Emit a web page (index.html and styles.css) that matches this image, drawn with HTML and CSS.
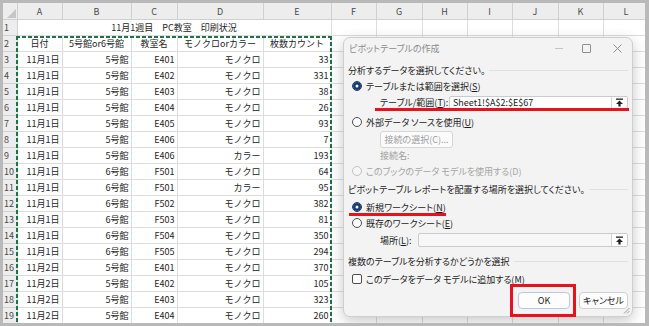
FILE: index.html
```html
<!DOCTYPE html>
<html lang="ja">
<head>
  <meta charset="UTF-8">
  <title>ピボットテーブルの作成</title>
  <link rel="stylesheet" href="styles.css">
</head>
<body>
  <div class="frame">
    <div class="sheet">
      <table class="grid">
        <colgroup>
          <col style="width:14px"><col style="width:45px"><col style="width:69px"><col style="width:46px"><col style="width:86px"><col style="width:68px">
          <col style="width:45px"><col style="width:46px"><col style="width:45px"><col style="width:45px"><col style="width:46px"><col style="width:45px"><col style="width:46px">
        </colgroup>
        <thead>
          <tr>
            <th class="corner"><span class="tri"></span></th>
            <th>A</th><th>B</th><th>C</th><th>D</th><th>E</th><th>F</th><th>G</th><th>H</th><th>I</th><th>J</th><th>K</th><th>L</th>
          </tr>
        </thead>
        <tbody>
          <tr><th class="rh">1</th><td colspan="5" class="c">11月1週目　PC教室　印刷状況</td><td></td><td></td><td></td><td></td><td></td><td></td><td></td></tr>
          <tr><th class="rh">2</th><td class="c">日付</td><td class="c">5号館or6号館</td><td class="c">教室名</td><td class="c">モノクロorカラー</td><td class="c">枚数カウント</td><td></td><td></td><td></td><td></td><td></td><td></td><td></td></tr>
          <tr><th class="rh">3</th><td class="r">11月1日</td><td class="r">5号館</td><td class="r">E401</td><td class="r">モノクロ</td><td class="r">33</td><td></td><td></td><td></td><td></td><td></td><td></td><td></td></tr>
          <tr><th class="rh">4</th><td class="r">11月1日</td><td class="r">5号館</td><td class="r">E402</td><td class="r">モノクロ</td><td class="r">331</td><td></td><td></td><td></td><td></td><td></td><td></td><td></td></tr>
          <tr><th class="rh">5</th><td class="r">11月1日</td><td class="r">5号館</td><td class="r">E403</td><td class="r">モノクロ</td><td class="r">38</td><td></td><td></td><td></td><td></td><td></td><td></td><td></td></tr>
          <tr><th class="rh">6</th><td class="r">11月1日</td><td class="r">5号館</td><td class="r">E404</td><td class="r">モノクロ</td><td class="r">26</td><td></td><td></td><td></td><td></td><td></td><td></td><td></td></tr>
          <tr><th class="rh">7</th><td class="r">11月1日</td><td class="r">5号館</td><td class="r">E405</td><td class="r">モノクロ</td><td class="r">93</td><td></td><td></td><td></td><td></td><td></td><td></td><td></td></tr>
          <tr><th class="rh">8</th><td class="r">11月1日</td><td class="r">5号館</td><td class="r">E406</td><td class="r">モノクロ</td><td class="r">7</td><td></td><td></td><td></td><td></td><td></td><td></td><td></td></tr>
          <tr><th class="rh">9</th><td class="r">11月1日</td><td class="r">5号館</td><td class="r">E406</td><td class="r">カラー</td><td class="r">193</td><td></td><td></td><td></td><td></td><td></td><td></td><td></td></tr>
          <tr><th class="rh">10</th><td class="r">11月1日</td><td class="r">6号館</td><td class="r">F501</td><td class="r">モノクロ</td><td class="r">64</td><td></td><td></td><td></td><td></td><td></td><td></td><td></td></tr>
          <tr><th class="rh">11</th><td class="r">11月1日</td><td class="r">6号館</td><td class="r">F501</td><td class="r">カラー</td><td class="r">95</td><td></td><td></td><td></td><td></td><td></td><td></td><td></td></tr>
          <tr><th class="rh">12</th><td class="r">11月1日</td><td class="r">6号館</td><td class="r">F502</td><td class="r">モノクロ</td><td class="r">382</td><td></td><td></td><td></td><td></td><td></td><td></td><td></td></tr>
          <tr><th class="rh">13</th><td class="r">11月1日</td><td class="r">6号館</td><td class="r">F503</td><td class="r">モノクロ</td><td class="r">81</td><td></td><td></td><td></td><td></td><td></td><td></td><td></td></tr>
          <tr><th class="rh">14</th><td class="r">11月1日</td><td class="r">6号館</td><td class="r">F504</td><td class="r">モノクロ</td><td class="r">350</td><td></td><td></td><td></td><td></td><td></td><td></td><td></td></tr>
          <tr><th class="rh">15</th><td class="r">11月1日</td><td class="r">6号館</td><td class="r">F505</td><td class="r">モノクロ</td><td class="r">294</td><td></td><td></td><td></td><td></td><td></td><td></td><td></td></tr>
          <tr><th class="rh">16</th><td class="r">11月2日</td><td class="r">5号館</td><td class="r">E401</td><td class="r">モノクロ</td><td class="r">370</td><td></td><td></td><td></td><td></td><td></td><td></td><td></td></tr>
          <tr><th class="rh">17</th><td class="r">11月2日</td><td class="r">5号館</td><td class="r">E402</td><td class="r">モノクロ</td><td class="r">105</td><td></td><td></td><td></td><td></td><td></td><td></td><td></td></tr>
          <tr><th class="rh">18</th><td class="r">11月2日</td><td class="r">5号館</td><td class="r">E403</td><td class="r">モノクロ</td><td class="r">323</td><td></td><td></td><td></td><td></td><td></td><td></td><td></td></tr>
          <tr><th class="rh">19</th><td class="r">11月2日</td><td class="r">5号館</td><td class="r">E404</td><td class="r">モノクロ</td><td class="r">260</td><td></td><td></td><td></td><td></td><td></td><td></td><td></td></tr>
        </tbody>
      </table>

      <!-- copy range marquee A2:E67 -->
      <div class="marquee"></div>

      <div class="dialog">
        <div class="titlebar">
          <span class="title">ピボットテーブルの作成</span>
          <span class="wbtn wbtn-min"><span class="min-line"></span></span>
          <span class="wbtn wbtn-max"><span class="max-box"></span></span>
          <span class="wbtn wbtn-close">
            <svg width="9" height="9" viewBox="0 0 9 9"><path d="M0.5 0.5 L8.5 8.5 M8.5 0.5 L0.5 8.5" stroke="#8f8f8f" stroke-width="1" fill="none"/></svg>
          </span>
        </div>

        <div class="sec sec-first">分析するデータを選択してください。</div>
        <div class="opt"><span class="radio checked"></span><span>テーブルまたは範囲を選択(<span class="key">S</span>)</span></div>
        <div class="field">
          <span class="field-label range-label">テーブル/範囲(<span class="key">T</span>):</span>
          <div class="input">
            <span class="input-text">Sheet1!$A$2:$E$67</span>
            <span class="pick">
              <svg width="9" height="9" viewBox="0 0 9 9"><rect x="1" y="0.5" width="7" height="1.3" fill="#222"/><path d="M4.5 2.6 L8 6 L5.6 6 L5.6 8.6 L3.4 8.6 L3.4 6 L1 6 Z" fill="#222"/></svg>
            </span>
          </div>
        </div>
        <div class="opt opt-gap"><span class="radio"></span><span>外部データ ソースを使用(<span class="key">U</span>)</span></div>
        <div class="btn-row"><span class="btn-ghost">接続の選択(C)...</span></div>
        <div class="muted-row">接続名:</div>
        <div class="opt disabled"><span class="radio"></span><span>このブックのデータ モデルを使用する(D)</span></div>

        <div class="sec sec-gap">ピボットテーブル レポートを配置する場所を選択してください。</div>
        <div class="opt opt-tight"><span class="radio checked"></span><span>新規ワークシート(<span class="key">N</span>)</span></div>
        <div class="opt"><span class="radio"></span><span>既存のワークシート(<span class="key">E</span>)</span></div>
        <div class="field field-place">
          <span class="field-label place-label">場所(<span class="key">L</span>):</span>
          <div class="input input-place">
            <span class="input-text"></span>
            <span class="pick">
              <svg width="9" height="9" viewBox="0 0 9 9"><rect x="1" y="0.5" width="7" height="1.3" fill="#222"/><path d="M4.5 2.6 L8 6 L5.6 6 L5.6 8.6 L3.4 8.6 L3.4 6 L1 6 Z" fill="#222"/></svg>
            </span>
          </div>
        </div>

        <div class="sec sec-gap2">複数のテーブルを分析するかどうかを選択</div>
        <div class="opt opt-tight"><span class="check"></span><span>このデータをデータ モデルに追加する(<span class="key">M</span>)</span></div>

        <div class="actions">
          <button class="btn btn-ok">OK</button>
          <button class="btn">キャンセル</button>
        </div>

        <svg class="grip" width="7" height="7" viewBox="0 0 7 7"><path d="M6.5 1 L1 6.5 M6.5 4 L4 6.5" stroke="#9a9a9a" stroke-width="1"/></svg>

        <!-- red annotations -->
        <div class="mark-line mark-range"></div>
        <div class="mark-line mark-new"></div>
        <div class="mark-box"></div>
      </div>
    </div>
  </div>
</body>
</html>
```

FILE: styles.css
```css
body {
  margin: 0;
  font-family: "Noto Sans CJK JP", "Noto Sans", sans-serif;
  background: #b9b9b9;
  text-autospace: no-autospace;
}
.frame {
  width: 649px;
  height: 326px;
  box-sizing: border-box;
  padding: 3px 4px 3px 3px;
  background: #b9b9b9;
}
.sheet {
  position: relative;
  width: 642px;
  height: 320px;
  overflow: hidden;
  background: #fff;
}

/* spreadsheet grid */
.grid {
  border-collapse: collapse;
  table-layout: fixed;
  width: 646px;
  font-size: 9px;
  color: #262626;
}
.grid td {
  border: 1px solid #dddddd;
  height: 15px;
  padding: 0 2px;
  line-height: 14px;
  white-space: nowrap;
  overflow: hidden;
}
.grid thead th {
  height: 16px;
  padding: 0;
  background: #ededed;
  border: 1px solid #d0d0d0;
  border-top: none;
  color: #4a4a4a;
  font-weight: normal;
  font-size: 9px;
  text-align: center;
}
.grid .rh {
  padding: 0 0 0 1px;
  background: #ededed;
  border: 1px solid #d0d0d0;
  border-left: none;
  color: #4a4a4a;
  font-weight: normal;
  font-size: 9px;
  text-align: left;
  overflow: hidden;
}
.grid .corner {
  position: relative;
  border-left: none;
}
.tri {
  position: absolute;
  right: 1px;
  bottom: 1px;
  width: 0;
  height: 0;
  border-left: 9px solid transparent;
  border-bottom: 9px solid #c6c6c6;
}
.c {
  text-align: center;
}
.r {
  text-align: right;
}

/* copy marquee */
.marquee {
  position: absolute;
  left: 13px;
  top: 33px;
  width: 316px;
  height: 400px;
  background:
    linear-gradient(90deg, #217346 65%, transparent 0) top left / 6px 2px repeat-x,
    linear-gradient(180deg, #217346 65%, transparent 0) top left / 2px 6px repeat-y,
    linear-gradient(180deg, #217346 65%, transparent 0) top right / 2px 6px repeat-y;
}

/* dialog */
.dialog {
  position: absolute;
  left: 340px;
  top: 34px;
  width: 290px;
  height: 280px;
  box-sizing: border-box;
  background: #f3f3f3;
  border: 1px solid #cfcfcf;
  border-radius: 7px;
  box-shadow: 0 4px 14px rgba(0, 0, 0, 0.22);
  font-size: 9px;
  font-feature-settings: "palt";
  color: #1b1b1b;
}
.key {
  text-decoration: underline;
  text-underline-offset: 1px;
}
.titlebar {
  display: flex;
  align-items: center;
  height: 21px;
  padding-left: 5px;
  color: #8c8c8c;
}
.title {
  flex: 1;
}
.wbtn {
  display: flex;
  align-items: center;
  justify-content: center;
  height: 21px;
}
.wbtn-min {
  width: 22px;
}
.wbtn-max {
  width: 32px;
}
.wbtn-close {
  width: 30px;
}
.min-line {
  width: 8px;
  height: 1px;
  background: #c4c4c4;
}
.max-box {
  width: 7px;
  height: 7px;
  border: 1px solid #8f8f8f;
  border-radius: 1px;
}

.sec {
  display: flex;
  align-items: center;
  gap: 4px;
  height: 16px;
  padding: 0 4px 0 4px;
  white-space: nowrap;
}
.sec::after {
  content: "";
  flex: 1;
  height: 1px;
  background: #e1e1e1;
}
.sec-first {
  margin-top: 3px;
}
.sec-gap {
  margin-top: 2px;
}
.sec-gap2 {
  margin-top: 5px;
}

.opt {
  display: flex;
  align-items: center;
  gap: 4px;
  height: 16px;
  padding-left: 8px;
  white-space: nowrap;
}
.opt-gap {
  margin-top: 4px;
}
.opt-tight {
  margin-top: 2px;
}
.radio {
  flex: none;
  width: 10px;
  height: 10px;
  box-sizing: border-box;
  border: 1px solid #4d4d4d;
  border-radius: 50%;
  background: #fbfbfb;
}
.radio.checked {
  border-color: #173a70;
  background: #fff;
  box-shadow: inset 0 0 0 2.5px #173a70;
}
.disabled {
  color: #a5a5a5;
}
.disabled .radio {
  border-color: #c2c2c2;
  background: #f6f6f6;
}
.check {
  flex: none;
  width: 10px;
  height: 10px;
  box-sizing: border-box;
  border: 1px solid #4d4d4d;
  border-radius: 2px;
  background: #fbfbfb;
}

.field {
  display: flex;
  align-items: center;
  height: 16px;
  padding: 0 4px 0 36px;
}
.field-label {
  white-space: nowrap;
}
.range-label {
  width: 69px;
}
.place-label {
  width: 38px;
}
.field-place {
  height: 16px;
  margin-top: 1px;
}
.input {
  flex: 1;
  display: flex;
  align-items: stretch;
  height: 13px;
  box-sizing: border-box;
  background: #fff;
  border: 1px solid #cbcbcb;
  border-radius: 2px;
}
.input-place {
  height: 14px;
  background: #f7f7f7;
}
.input-text {
  flex: 1;
  padding-left: 3px;
  line-height: 11px;
  font-feature-settings: normal;
}
.pick {
  display: flex;
  align-items: center;
  justify-content: center;
  width: 15px;
  border-left: 1px solid #d6d6d6;
  background: #fdfdfd;
}

.btn-row {
  height: 18px;
  padding-left: 36px;
  margin-top: 1px;
}
.btn-ghost {
  display: inline-flex;
  align-items: center;
  justify-content: center;
  width: 73px;
  height: 17px;
  box-sizing: border-box;
  border: 1px solid #d6d6d6;
  border-radius: 3px;
  background: #fbfbfb;
  color: #a0a0a0;
}
.muted-row {
  height: 14px;
  line-height: 14px;
  padding-left: 36px;
  color: #a0a0a0;
}

.actions {
  display: flex;
  justify-content: flex-end;
  gap: 9px;
  margin-top: 5px;
  padding-right: 4px;
}
.btn {
  height: 17px;
  width: 49px;
  padding: 0;
  box-sizing: border-box;
  font-family: inherit;
  font-size: 9px;
  font-feature-settings: "palt";
  color: #1b1b1b;
  background: #fdfdfd;
  border: 1px solid #d0d0d0;
  border-radius: 4px;
}
.btn-ok {
  width: 52px;
  border-color: #b9c9e0;
}

.grip {
  position: absolute;
  right: 2px;
  bottom: 2px;
}

/* red annotations */
.mark-line {
  position: absolute;
  height: 3px;
  background: #e8121b;
}
.mark-range {
  left: 31px;
  top: 70px;
  width: 254px;
}
.mark-new {
  left: 5px;
  top: 175px;
  width: 97px;
}
.mark-box {
  position: absolute;
  left: 166px;
  top: 246px;
  width: 66px;
  height: 33px;
  box-sizing: border-box;
  border: 3px solid #e8121b;
}
```
